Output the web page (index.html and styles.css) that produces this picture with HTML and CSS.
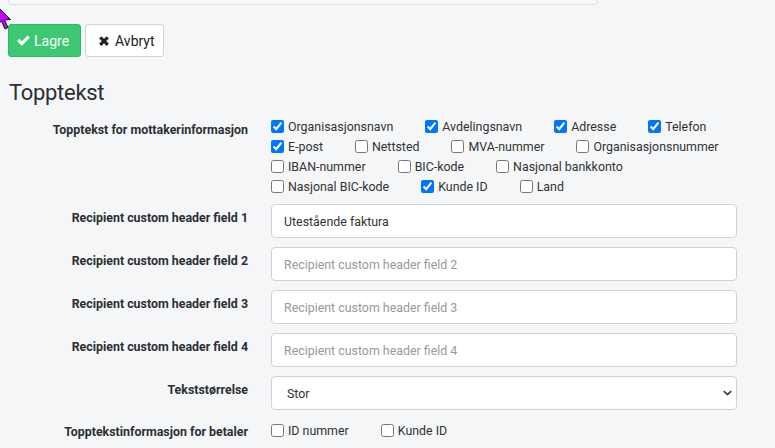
FILE: index.html
```html
<!DOCTYPE html>
<html lang="no">
<head>
<meta charset="utf-8">
<link rel="stylesheet" href="styles.css">
</head>
<body>
<div class="page">
  <div class="prev-box"></div>
  <div class="actions">
    <button class="btn btn-save"><svg class="ico" viewBox="0 0 16 16" width="15" height="15"><path d="M1.2 8.6 L3.6 6.2 L6.2 8.8 L12.4 2.6 L14.8 5 L6.2 13.6 Z" fill="#fff"/></svg>Lagre</button>
    <button class="btn btn-cancel"><svg class="ico" viewBox="0 0 16 16" width="12" height="12"><path d="M1.5 4.5 L4.5 1.5 L8 5 L11.5 1.5 L14.5 4.5 L11 8 L14.5 11.5 L11.5 14.5 L8 11 L4.5 14.5 L1.5 11.5 L5 8 Z" fill="#222"/></svg>Avbryt</button>
  </div>
  <h2 class="title">Topptekst</h2>
  <div class="form">
    <div class="label label-top">Topptekst for mottakerinformasjon</div>
    <div class="checks">
      <label class="chk"><input type="checkbox" checked>Organisasjonsnavn</label>
      <label class="chk"><input type="checkbox" checked>Avdelingsnavn</label>
      <label class="chk"><input type="checkbox" checked>Adresse</label>
      <label class="chk"><input type="checkbox" checked>Telefon</label>
      <label class="chk"><input type="checkbox" checked>E-post</label>
      <label class="chk"><input type="checkbox">Nettsted</label>
      <label class="chk"><input type="checkbox">MVA-nummer</label>
      <label class="chk"><input type="checkbox">Organisasjonsnummer</label>
      <label class="chk"><input type="checkbox">IBAN-nummer</label>
      <label class="chk"><input type="checkbox">BIC-kode</label>
      <label class="chk"><input type="checkbox">Nasjonal bankkonto</label>
      <label class="chk"><input type="checkbox">Nasjonal BIC-kode</label>
      <label class="chk"><input type="checkbox" checked>Kunde ID</label>
      <label class="chk"><input type="checkbox">Land</label>
    </div>

    <div class="label">Recipient custom header field 1</div>
    <input class="field" type="text" value="Utestående faktura">

    <div class="label">Recipient custom header field 2</div>
    <input class="field" type="text" placeholder="Recipient custom header field 2">

    <div class="label">Recipient custom header field 3</div>
    <input class="field" type="text" placeholder="Recipient custom header field 3">

    <div class="label">Recipient custom header field 4</div>
    <input class="field" type="text" placeholder="Recipient custom header field 4">

    <div class="label">Tekststørrelse</div>
    <div class="select">
      <span>Stor</span>
      <svg viewBox="0 0 12 8" width="9" height="6"><path d="M1 1.5 L6 6 L11 1.5" fill="none" stroke="#444" stroke-width="2.4"/></svg>
    </div>

    <div class="label label-top label-last">Topptekstinformasjon for betaler</div>
    <div class="checks checks-last">
      <label class="chk"><input type="checkbox">ID nummer</label>
      <label class="chk"><input type="checkbox">Kunde ID</label>
    </div>
  </div>
</div>
<svg class="cursor" viewBox="0 0 20 30" width="20" height="30"><path d="M1 1 L1 20 L5.5 16 L9 24 L12 22.5 L8.5 15 L14.5 14.5 Z" fill="#c400ff" stroke="#111" stroke-width="1"/></svg>
</body>
</html>
```
FILE: styles.css
```css
html, body {
  margin: 0;
  padding: 0;
  background: #f5f6f8;
}
body {
  font-family: Roboto, "Liberation Sans", sans-serif;
  color: #333;
  width: 775px;
  height: 448px;
  overflow: hidden;
  position: relative;
}
.page {
  padding: 0 8px;
}
.prev-box {
  width: 588px;
  height: 4px;
  border: 1px solid #dcdde0;
  border-top: none;
  border-radius: 0 0 4px 4px;
  background: #f7f8fa;
}
.actions {
  display: flex;
  gap: 4px;
  margin-top: 19px;
}
.btn {
  height: 33px;
  display: flex;
  align-items: center;
  font-family: Roboto, sans-serif;
  font-size: 14px;
  border-radius: 3px;
  cursor: pointer;
}
.btn-save {
  background: #3ec873;
  border: 1px solid #35b866;
  color: #fff;
  gap: 3px;
  padding: 0 11px 0 7px;
}
.btn-cancel {
  background: #fff;
  border: 1px solid #d3d4d7;
  color: #222;
  gap: 5px;
  padding: 0 8px 0 12px;
}
.title {
  font-size: 22px;
  font-weight: 400;
  letter-spacing: -0.3px;
  margin: 23px 0 0 1px;
  line-height: 26px;
  color: #2b2f33;
}
.form {
  display: grid;
  grid-template-columns: 240px 466px;
  column-gap: 23px;
  row-gap: 9px;
  margin-top: 12px;
}
.label {
  text-align: right;
  font-weight: 700;
  font-size: 12.4px;
  color: #2b2f33;
  align-self: center;
  padding-bottom: 8px;
}
.label-top {
  align-self: start;
  padding-top: 4px;
  padding-bottom: 0;
}
.checks {
  display: flex;
  flex-wrap: wrap;
  row-gap: 3px;
  column-gap: 32px;
}
.chk {
  display: flex;
  align-items: center;
  font-size: 12.4px;
  line-height: 17px;
  color: #333;
}
.chk input {
  margin: 0 4px 0 0;
  width: 13px;
  height: 13px;
}
.label-last {
  padding-top: 5px;
}
.checks-last {
  margin-top: 3px;
}
.field {
  box-sizing: border-box;
  height: 34px;
  width: 466px;
  border: 1px solid #cfd1d4;
  border-radius: 4px;
  background: #fff;
  padding: 0 12px;
  font-family: Roboto, sans-serif;
  font-size: 12.4px;
  color: #333;
  margin: 0;
}
.field::placeholder {
  color: #999;
}
.select {
  box-sizing: border-box;
  height: 34px;
  border: 1px solid #cfd1d4;
  border-radius: 4px;
  background: #fff;
  display: flex;
  align-items: center;
  justify-content: space-between;
  padding: 0 4px 0 15px;
  font-size: 12.4px;
}
.cursor {
  position: absolute;
  left: -4px;
  top: 5px;
}
```
